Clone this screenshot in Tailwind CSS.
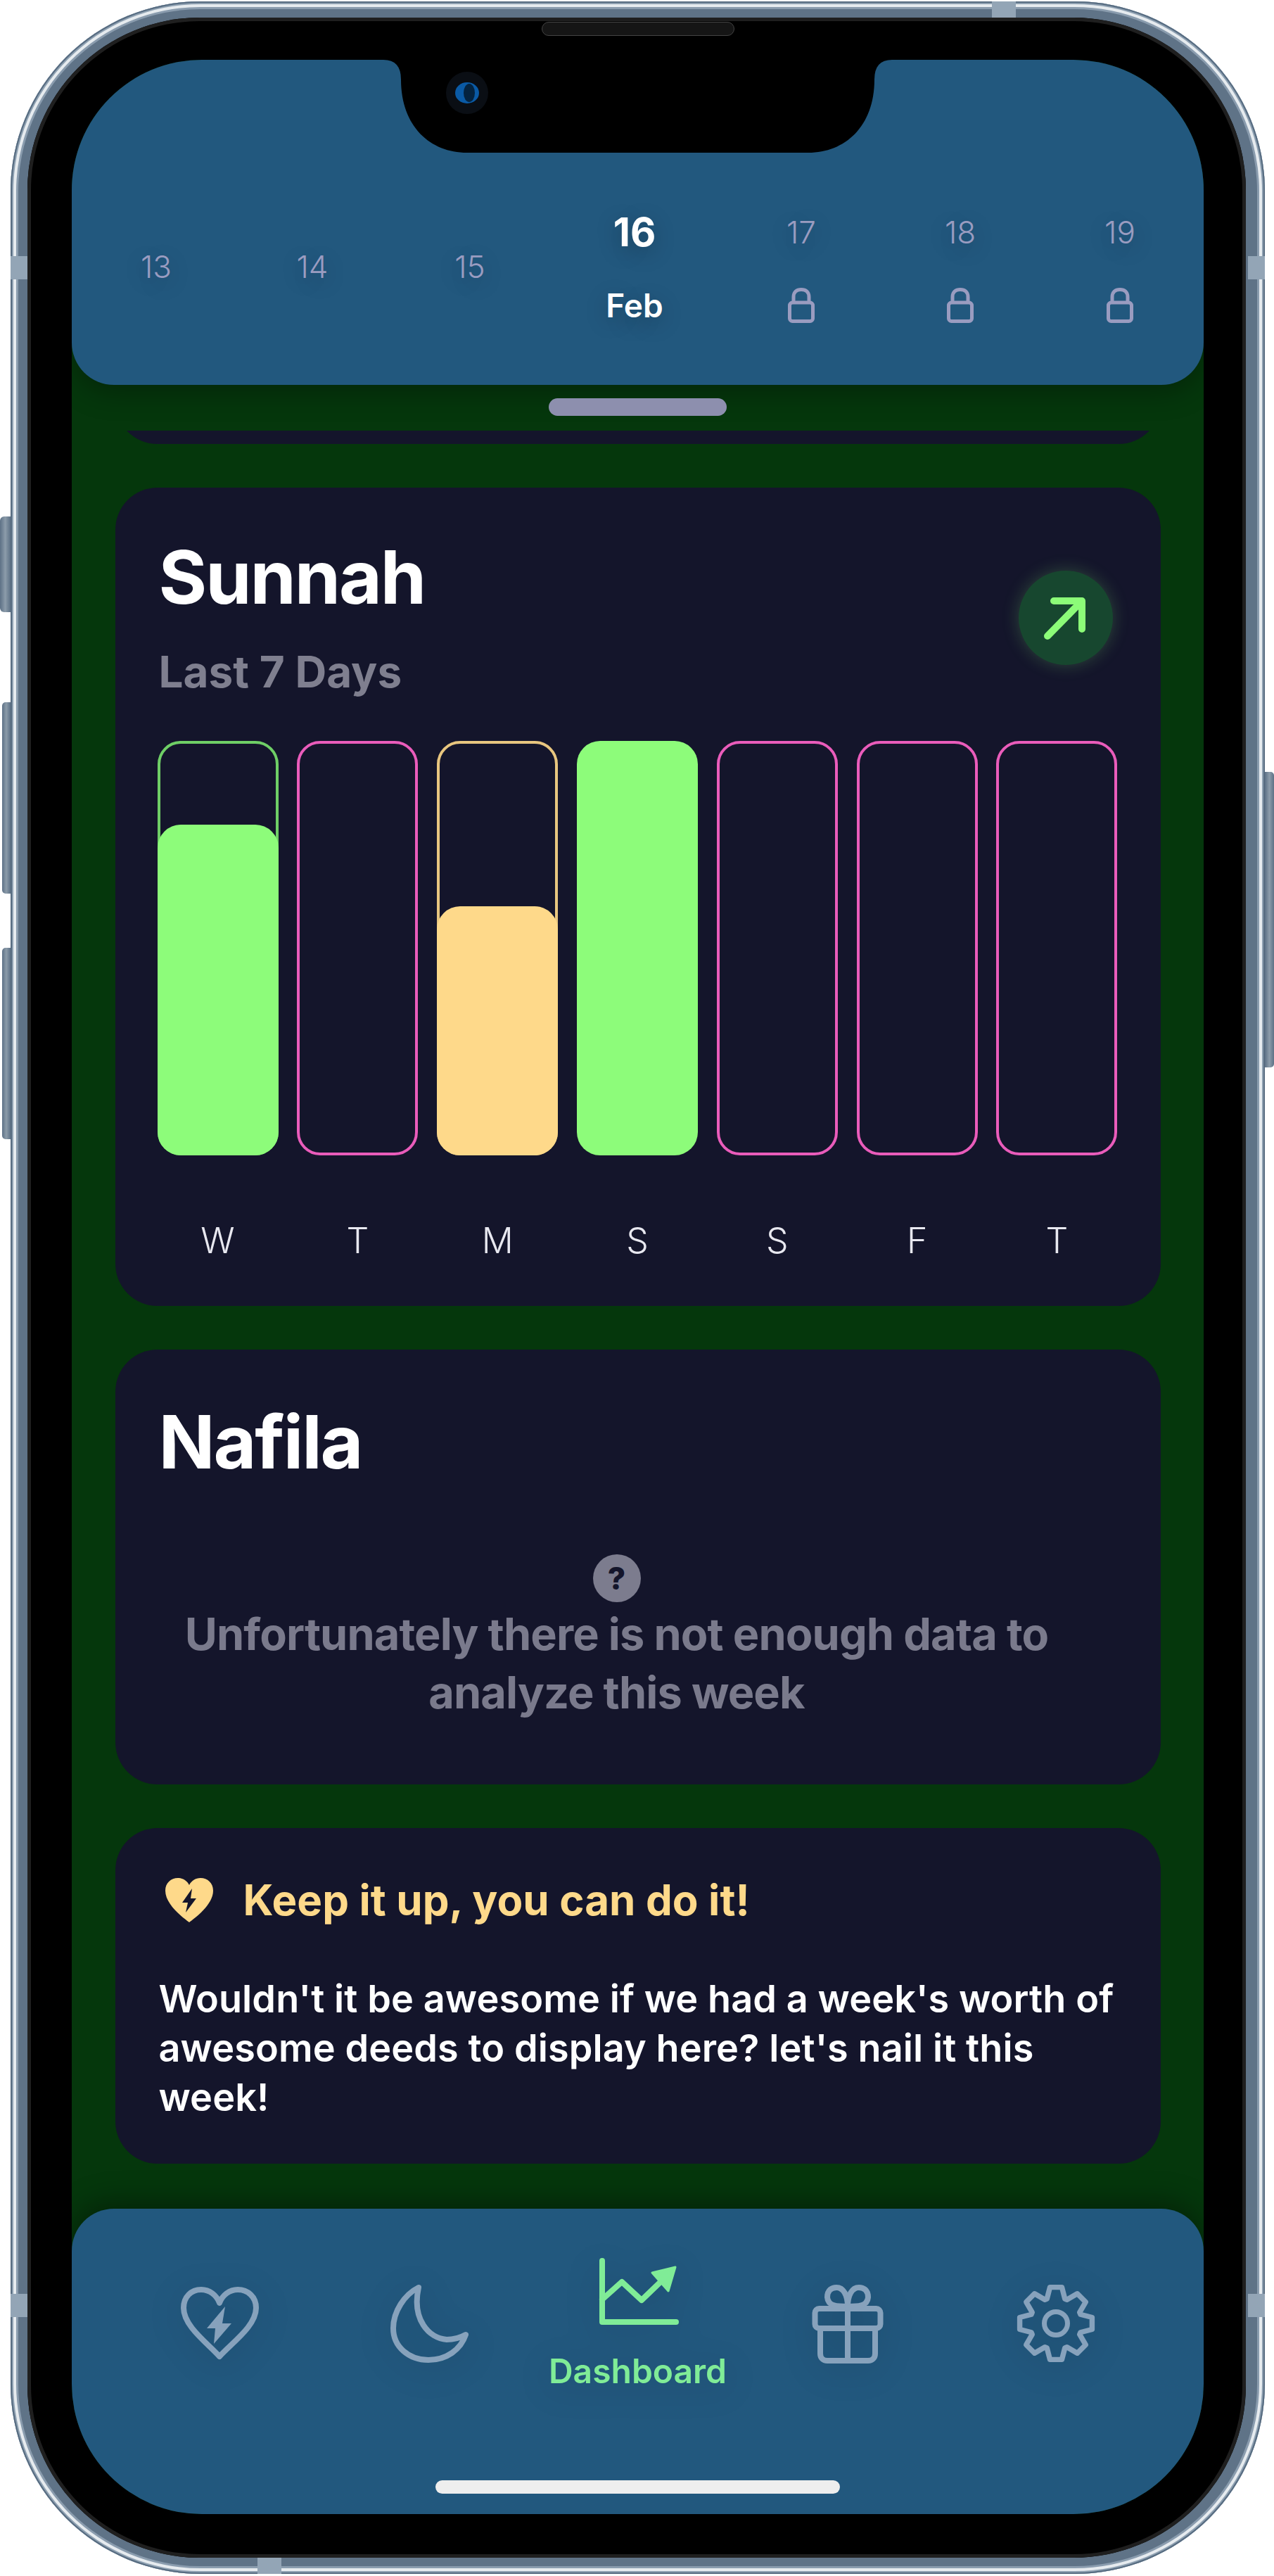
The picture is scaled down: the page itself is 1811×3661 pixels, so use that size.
<!DOCTYPE html>
<html lang="en">
<head>
    <meta charset="UTF-8">
    <meta name="viewport" content="width=device-width, initial-scale=1.0">
    <title>Dashboard</title>
    <script src="https://cdn.jsdelivr.net/npm/@tailwindcss/browser@4"></script>
</head>
<body class="w-[1811px] h-[3661px] bg-white overflow-hidden [font-family:Inter,sans-serif]">
    <!-- Device frame -->
    <div class="relative ml-[15px] mt-[2px] w-[1783px] h-[3656px] rounded-[270px] bg-[#5f7387] pt-[23px] pr-[27px] pb-[23px] pl-[24px] shadow-[inset_0_0_0_2px_#566b80,inset_0_0_0_4px_#8ea0b1,inset_0_0_0_8px_#e6ebef,inset_0_0_0_11px_#8a9cae]">
        <!-- Side buttons -->
        <div class="absolute left-[-15px] top-[732px] w-[15px] h-[136px] rounded-l-[6px] bg-linear-to-r from-[#5d7186] via-[#8c9caa] to-[#5d7186]"></div>
        <div class="absolute left-[-12px] top-[996px] w-[12px] h-[272px] rounded-l-[5px] bg-linear-to-r from-[#5d7186] via-[#8c9caa] to-[#5d7186]"></div>
        <div class="absolute left-[-12px] top-[1345px] w-[12px] h-[272px] rounded-l-[5px] bg-linear-to-r from-[#5d7186] via-[#8c9caa] to-[#5d7186]"></div>
        <div class="absolute right-[-13px] top-[1095px] w-[13px] h-[420px] rounded-r-[5px] bg-linear-to-l from-[#5d7186] via-[#8c9caa] to-[#5d7186]"></div>

        <!-- Antenna bands -->
        <div class="absolute left-0 top-[362px] w-[24px] h-[33px] bg-[#93a5b6]"></div>
        <div class="absolute left-0 top-[3258px] w-[24px] h-[33px] bg-[#93a5b6]"></div>
        <div class="absolute right-0 top-[362px] w-[24px] h-[33px] bg-[#93a5b6]"></div>
        <div class="absolute right-0 top-[3258px] w-[24px] h-[33px] bg-[#93a5b6]"></div>
        <div class="absolute left-[1395px] top-0 w-[34px] h-[23px] bg-[#93a5b6]"></div>
        <div class="absolute left-[351px] bottom-0 w-[34px] h-[23px] bg-[#93a5b6]"></div>

        <!-- Bezel -->
        <div class="relative w-full h-full rounded-[245px] bg-black pt-[60px] pl-[63px] shadow-[inset_0_0_0_5px_#1f1f1f]">
            <div class="absolute left-[731px] top-[6px] w-[274px] h-[20px] rounded-full bg-[#151515] border border-[#444]"></div>

            <!-- Screen -->
            <div class="relative w-[1609px] h-[3488px] rounded-[185px] overflow-hidden bg-[#05370c] flex flex-col">

                <!-- Date strip -->
                <header class="h-[462px] shrink-0 bg-[#22587e] rounded-b-[60px] shadow-[0_10px_40px_rgba(0,0,0,0.3)] flex items-start pt-[215px] pl-[20px] text-center [text-shadow:0_8px_30px_rgb(0_0_0/0.25)]">
                    <div class="w-[200px] mt-[49px] text-[44px] leading-[60px] font-light text-[#9a9cc0]">13</div>
                    <div class="w-[244px] mt-[49px] text-[44px] leading-[60px] font-light text-[#9a9cc0]">14</div>
                    <div class="w-[204px] mt-[49px] text-[44px] leading-[60px] font-light text-[#9a9cc0]">15</div>
                    <div class="w-[264px] flex flex-col items-center text-white">
                        <div class="text-[56px] leading-[60px] font-bold">16</div>
                        <div class="mt-[44px] text-[46px] leading-[60px] font-semibold">Feb</div>
                    </div>
                    <div class="w-[210px] flex flex-col items-center text-[#9a9cc0]">
                        <div class="text-[44px] leading-[60px] font-light">17</div>
                        <svg class="mt-[49px]" width="38" height="50" viewBox="0 0 38 50" fill="none" stroke="#9a9cc0" stroke-width="5"><rect x="2.5" y="21" width="33" height="26.5" rx="4"/><path d="M8 21V13C8 6 12.500 2.500 19 2.500S30 6 30 13V21"/></svg>
                    </div>
                    <div class="w-[242px] flex flex-col items-center text-[#9a9cc0]">
                        <div class="text-[44px] leading-[60px] font-light">18</div>
                        <svg class="mt-[49px]" width="38" height="50" viewBox="0 0 38 50" fill="none" stroke="#9a9cc0" stroke-width="5"><rect x="2.5" y="21" width="33" height="26.5" rx="4"/><path d="M8 21V13C8 6 12.500 2.500 19 2.500S30 6 30 13V21"/></svg>
                    </div>
                    <div class="w-[212px] flex flex-col items-center text-[#9a9cc0]">
                        <div class="text-[44px] leading-[60px] font-light">19</div>
                        <svg class="mt-[49px]" width="38" height="50" viewBox="0 0 38 50" fill="none" stroke="#9a9cc0" stroke-width="5"><rect x="2.5" y="21" width="33" height="26.5" rx="4"/><path d="M8 21V13C8 6 12.500 2.500 19 2.500S30 6 30 13V21"/></svg>
                    </div>
                </header>

                <!-- Scrolling content -->
                <main class="flex-1 min-h-0 overflow-hidden flex flex-col items-center pt-[19px]">
                    <div class="w-[253px] h-[25px] shrink-0 rounded-full bg-[#8d8fae]"></div>

                    <!-- Card scrolled out under the handle -->
                    <div class="mt-[21px] w-[1486px] h-[19px] shrink-0 overflow-hidden flex flex-col justify-end">
                        <div class="h-[120px] shrink-0 rounded-[60px] bg-[#14152b]"></div>
                    </div>

                    <!-- Sunnah -->
                    <section class="mt-[62px] w-[1486px] h-[1163px] shrink-0 rounded-[60px] bg-[#14152b] pt-[72px]">
                        <div class="flex items-center justify-between pl-[62px] pr-[68px]">
                            <div>
                                <h2 class="text-[105px] leading-[110px] font-bold tracking-[-0.02em] text-white">Sunnah</h2>
                                <p class="mt-[45px] text-[62px] leading-[70px] font-bold text-[#7f7f8f]">Last 7 Days</p>
                            </div>
                            <div class="w-[134px] h-[134px] rounded-full bg-[#17472f] shadow-[0_0_24px_rgba(140,252,120,0.22)] flex items-center justify-center">
                                <svg width="134" height="134" viewBox="0 0 134 134" fill="none" stroke="#8cfc78" stroke-width="10" stroke-linecap="round" stroke-linejoin="round"><path d="M41 93L90 43M50 43H90V83"/></svg>
                            </div>
                        </div>
                        <div class="mt-[63px] ml-[60px] w-[1365px] h-[589px] flex justify-between">
                            <div class="relative w-[172px] h-full rounded-[33px] border-4 border-[#6fcf66]">
                                <div class="absolute inset-x-[-4px] bottom-[-4px] h-[470px] rounded-[33px] bg-[#8dfc7a]"></div>
                            </div>
                            <div class="w-[172px] h-full rounded-[33px] border-4 border-[#ea5cbb]"></div>
                            <div class="relative w-[172px] h-full rounded-[33px] border-4 border-[#e8c67f]">
                                <div class="absolute inset-x-[-4px] bottom-[-4px] h-[354px] rounded-[33px] bg-[#fed98a]"></div>
                            </div>
                            <div class="w-[172px] h-full rounded-[33px] bg-[#8dfc7a]"></div>
                            <div class="w-[172px] h-full rounded-[33px] border-4 border-[#ea5cbb]"></div>
                            <div class="w-[172px] h-full rounded-[33px] border-4 border-[#ea5cbb]"></div>
                            <div class="w-[172px] h-full rounded-[33px] border-4 border-[#ea5cbb]"></div>
                        </div>
                        <div class="mt-[91px] ml-[60px] w-[1365px] flex justify-between text-[50px] leading-[60px] font-light text-[#e8e8f0] text-center">
                            <span class="w-[172px]">W</span>
                            <span class="w-[172px]">T</span>
                            <span class="w-[172px]">M</span>
                            <span class="w-[172px]">S</span>
                            <span class="w-[172px]">S</span>
                            <span class="w-[172px]">F</span>
                            <span class="w-[172px]">T</span>
                        </div>
                    </section>

                    <!-- Nafila -->
                    <section class="mt-[62px] w-[1486px] h-[618px] shrink-0 rounded-[60px] bg-[#14152b] pt-[76px] pl-[62px]">
                        <h2 class="text-[105px] leading-[110px] font-bold tracking-[-0.02em] text-white">Nafila</h2>
                        <div class="mt-[105px] w-[1302px] flex flex-col items-center text-center">
                            <div class="w-[68px] h-[68px] rounded-full bg-[#7c7c8e] flex items-center justify-center text-[44px] leading-none font-extrabold text-[#14152b]">?</div>
                            <p class="mt-[4px] text-[63px] leading-[83px] font-bold tracking-[-0.014em] text-[#7a7a8c]">Unfortunately there is not enough data to analyze this week</p>
                        </div>
                    </section>

                    <!-- Encouragement -->
                    <section class="mt-[62px] w-[1486px] h-[477px] shrink-0 rounded-[60px] bg-[#14152b] pt-[67px] pl-[62px] pr-[62px]">
                        <div class="flex items-center pl-[9px] gap-[43px]">
                            <svg width="68" height="63" viewBox="0 0 68 63">
                                <path fill="#fed98a" d="M34 63C26 57 0 38 0 18C0 7 8 0 18 0C25 0 31 4 34 10C37 4 43 0 50 0C60 0 68 7 68 18C68 38 42 57 34 63Z"/>
                                <path fill="#14152b" d="M38 15L24 35H32L29 49L44 29H36Z"/>
                            </svg>
                            <h3 class="text-[60px] leading-[70px] font-bold tracking-[0.002em] text-[#fed98a]">Keep it up, you can do it!</h3>
                        </div>
                        <p class="mt-[71px] text-[54px] leading-[70px] font-semibold tracking-[0.1px] text-white">Wouldn't it be awesome if we had a week's worth of awesome deeds to display here? let's nail it this week!</p>
                    </section>
                </main>

                <!-- Tab bar -->
                <nav class="h-[434px] shrink-0 bg-[#22587e] rounded-t-[60px] shadow-[0_-10px_40px_rgba(0,0,0,0.35)] flex flex-col items-center">
                    <div class="w-[1490px] h-[326px] grid grid-cols-5 drop-shadow-[0_8px_24px_rgba(0,0,0,0.15)]">
                        <div class="flex items-center justify-center pl-[4px]">
                            <svg width="111" height="104" viewBox="0 0 111 104" fill="none" stroke="#87a2bc" stroke-width="8" stroke-linejoin="round">
                                <path d="M55 99C38 80 4 56 4 30C4 14 15 4 29 4C41 4 51 12 55 23C59 12 69 4 81 4C95 4 107 14 107 30C107 56 72 80 55 99Z"/>
                                <path fill="#87a2bc" stroke="none" d="M63 28L37 59H49L47 81L72 52H59Z"/>
                            </svg>
                        </div>
                        <div class="flex items-center justify-center pl-[4px]">
                            <svg width="111" height="111" viewBox="0 0 111 111" fill="none" stroke="#87a2bc" stroke-width="8" stroke-linejoin="round">
                                <path d="M40 4C20 14 4 38 4 62C4 88 26 107 54 107C80 107 100 92 107 71C98 76 90 78 80 78C55 76 30 50 40 4Z"/>
                            </svg>
                        </div>
                        <div class="flex flex-col items-center justify-center mb-[20px]">
                            <svg width="170" height="130" viewBox="0 0 170 130" fill="none" stroke="#80ec97" stroke-width="8" stroke-linecap="round" stroke-linejoin="round">
                                <path d="M34 23V110H139"/>
                                <path d="M34 78L62 53L90 79L117 53"/>
                                <path fill="#80ec97" stroke-width="3" d="M138 32L105 40L128 66Z"/>
                            </svg>
                            <span class="mt-[26px] text-[48px] leading-[48px] font-semibold text-[#80ec97]">Dashboard</span>
                        </div>
                        <div class="flex items-center justify-center">
                            <svg width="108" height="120" viewBox="10 10 108 120" fill="none" stroke="#87a2bc" stroke-width="8" stroke-linejoin="round">
                                <rect x="17.500" y="49" width="93" height="28" rx="6"/>
                                <path d="M25 77V113C25 119 29 123 35 123H93C99 123 103 119 103 113V77"/>
                                <path d="M64 48V123"/>
                                <path d="M64 46C50 46 36 46 35 33C35 22 42 19 48 19C58 19 64 30 64 46"/>
                                <path d="M64 46C78 46 92 46 93 33C93 22 86 19 80 19C70 19 64 30 64 46"/>
                            </svg>
                        </div>
                        <div class="flex items-center justify-center pr-[4px]">
                            <svg width="120" height="120" viewBox="-60 -60 120 120" fill="none" stroke="#87a2bc" stroke-width="7" stroke-linejoin="round">
                                <path transform="scale(1.06)" d="M-12 -33L-8 -48.500L8 -48.500L12 -33L14.850 -31.800L28.600 -39.900L39.900 -28.600L31.800 -14.850L33 -12L48.500 -8L48.500 8L33 12L31.800 14.850L39.900 28.600L28.600 39.900L14.850 31.800L12 33L8 48.500L-8 48.500L-12 33L-14.850 31.800L-28.600 39.900L-39.900 28.600L-31.800 14.850L-33 12L-48.500 8L-48.500 -8L-33 -12L-31.800 -14.850L-39.900 -28.600L-28.600 -39.900L-14.850 -31.800Z"/>
                                <circle r="16.500"/>
                            </svg>
                        </div>
                    </div>
                    <div class="mt-[60px] w-[575px] h-[19px] rounded-full bg-[#eeeeee]"></div>
                </nav>

                <!-- Notch and front camera -->
                <svg class="absolute left-0 top-0" width="1609" height="140" viewBox="0 0 1609 140">
                    <path fill="#000" d="M443 0Q468 0 468 28C468 95 510 132 562 132H1047C1099 132 1141 95 1141 28Q1141 0 1166 0Z"/>
                    <circle cx="562" cy="47" r="30" fill="#0a0e14"/>
                    <ellipse cx="562" cy="47" rx="17" ry="15" fill="#0a5aa5"/>
                    <ellipse cx="565" cy="47" rx="8" ry="13" fill="#04233f"/>
                </svg>
            </div>
        </div>
    </div>
</body>
</html>
